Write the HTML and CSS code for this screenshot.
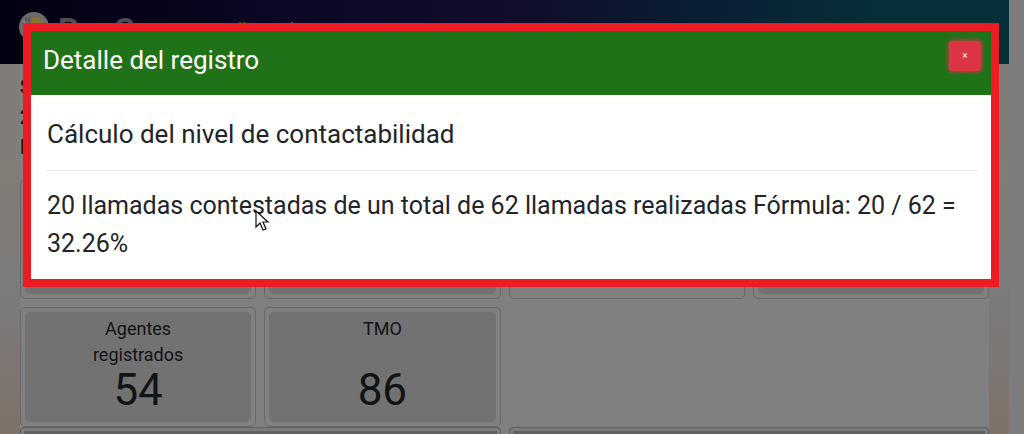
FILE: index.html
```html
<!DOCTYPE html>
<html lang="es">
<head>
<meta charset="utf-8">
<meta name="viewport" content="width=device-width, initial-scale=1">
<title>Detalle del registro</title>
<link rel="stylesheet" href="styles.css">
</head>
<body>
<div class="screen">
  <div class="page">
    <header class="navbar">
      <svg class="logo" viewBox="0 0 32 32" aria-hidden="true">
        <circle cx="16" cy="16" r="15" fill="#6c6c6c"/>
        <path d="M5 9l5 2v9H7z" fill="#858585"/>
        <path d="M8 6v8M11 6v8" stroke="#454545" fill="none"/>
        <path d="M14 7h7l4 4v9H14z" fill="#8b7429"/>
        <path d="M18 9l3 3v6h-3z" fill="#6e6e62"/>
      </svg>
      <span class="brand"><span>P</span><span>S</span></span>
      <span class="nav-text">ll</span>
      <span class="nav-text">i</span>
    </header>
    <main class="content">
      <section class="panel">
        <div class="intro">
          <div>S</div>
          <div>2</div>
          <div>I</div>
        </div>
        <div class="cards">
          <article class="card"><div class="card-body"></div></article>
          <article class="card"><div class="card-body"></div></article>
          <article class="card"><div class="card-body plain"></div></article>
          <article class="card"><div class="card-body"></div></article>
          <article class="card"><div class="card-body"><h2 class="card-title">Agentes registrados</h2><p class="card-value">54</p></div></article>
          <article class="card"><div class="card-body"><h2 class="card-title">TMO</h2><p class="card-value">86</p></div></article>
        </div>
        <div class="charts">
          <div class="chart"></div>
          <div class="chart"></div>
        </div>
      </section>
    </main>
  </div>
  <div class="scroll-track"></div>
  <div class="modal" role="dialog" aria-modal="true" aria-labelledby="modal-title">
    <div class="modal-header">
      <h1 class="modal-title" id="modal-title">Detalle del registro</h1>
      <button class="close" type="button" aria-label="Cerrar">×</button>
    </div>
    <div class="modal-body">
      <h2 class="modal-subtitle">Cálculo del nivel de contactabilidad</h2>
      <p class="modal-text">20 llamadas contestadas de un total de 62 llamadas realizadas Fórmula: 20 / 62 = 32.26%</p>
    </div>
  </div>
  <svg class="cursor" viewBox="0 0 14 22" aria-hidden="true">
    <path d="M1 1v16l4-4 3 7 3-1-3-7h5z" fill="#fff" stroke="#111" stroke-width="1.2"/>
  </svg>
</div>
</body>
</html>
```
FILE: styles.css
```css
* {
  box-sizing: border-box;
}

body {
  margin: 0;
  font-family: Roboto, "Liberation Sans", sans-serif;
  color: #111315;
}

h1,
h2,
p {
  margin: 0;
  font-weight: 400;
}

.screen {
  position: relative;
  display: flex;
  height: 100vh;
  overflow: hidden;
}

.page {
  flex: 1;
  background: linear-gradient(#807c77 64px, #827d77 180px, #7c7a7c 300px, #7e7268 100%);
}

.scroll-track {
  width: 15px;
  background: #7d7d7d;
}

.navbar {
  display: flex;
  align-items: flex-start;
  height: 64px;
  padding: 11px 18px;
  background: linear-gradient(90deg, #020010, #0c0a28 35%, #110c2b 50%, #0a1b30 66%, #063039 88%, #063039);
}

.logo {
  width: 32px;
  height: 32px;
}

.brand {
  display: flex;
  gap: 36px;
  width: 184px;
  padding-left: 8px;
  font-size: 32px;
  font-weight: 700;
  line-height: 36px;
  color: #4d4d52;
}

.nav-text {
  width: 52px;
  padding-left: 4px;
  font-size: 16px;
  line-height: 36px;
  color: #837127;
}

.content {
  padding: 0 20px;
}

.panel {
  background: #808080;
}

.intro {
  height: 115px;
  padding-top: 8px;
  font-size: 20px;
  font-weight: 700;
  line-height: 30px;
  color: #300808;
}

.cards {
  display: grid;
  grid-template-columns: repeat(4, 1fr);
  gap: 8px;
}

.card {
  height: 120px;
  padding: 4px;
  border: 1px solid #696969;
  border-radius: 5px;
}

.card-body {
  display: flex;
  flex-direction: column;
  align-items: center;
  justify-content: space-between;
  height: 100%;
  padding: 4px 60px 12px;
  border-radius: 5px;
  background: #727272;
  text-align: center;
}

.plain {
  background: none;
}

.card-title {
  font-size: 18px;
  line-height: 26px;
}

.card-value {
  font-size: 44px;
  line-height: 40px;
}

.charts {
  display: grid;
  grid-template-columns: repeat(2, 1fr);
  gap: 8px;
}

.chart {
  height: 120px;
  border: 1px solid #606060;
  border-radius: 4px;
  background: #626262;
  box-shadow: inset 0 0 0 3px #7c7c7c;
}

.modal {
  position: absolute;
  top: 23px;
  left: 23px;
  right: 25px;
  border: 8px solid #ed1c24;
  background: #fff;
  color: #212529;
}

.modal-header {
  display: flex;
  align-items: flex-start;
  justify-content: space-between;
  padding: 10px 10px 15px 12px;
  background: #1f7217;
  color: #fff;
}

.modal-title {
  font-size: 26px;
  line-height: 39px;
}

.close {
  width: 32px;
  height: 30px;
  padding: 0;
  border: 0;
  border-radius: 4px;
  background: #dc3545;
  box-shadow: 0 0 3px 2px rgba(220, 53, 69, 0.6);
  color: #fff;
  font: 10px/30px Roboto, sans-serif;
}

.modal-body {
  padding: 16px 14px 16px 16px;
}

.modal-subtitle {
  padding-bottom: 12px;
  margin-bottom: 16px;
  border-bottom: 1px solid #e6e6e6;
  font-size: 26px;
  line-height: 47px;
}

.modal-text {
  font-size: 25px;
  line-height: 38px;
}

.cursor {
  position: absolute;
  top: 210px;
  left: 255px;
  width: 14px;
  height: 22px;
}
```
